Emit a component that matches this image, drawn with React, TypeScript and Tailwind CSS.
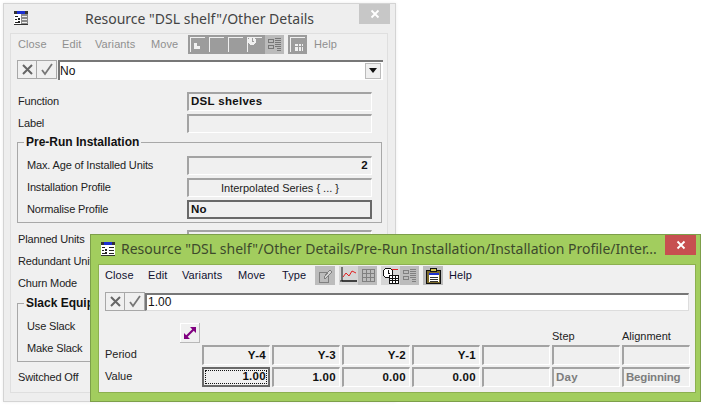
import type { ReactNode } from 'react';

const labelFont = "font-['Liberation_Sans',Arial,sans-serif]";
const titleFont = "font-['Noto_Sans','Open_Sans',sans-serif]";

function WindowIcon({ className, muted }: { className: string; muted?: boolean }) {
  return (
    <svg className={className} width="14" height="14" viewBox="0 0 14 14" shapeRendering="crispEdges">
      <rect width="14" height="14" fill="#333" />
      <rect x="3" y="0" width="8" height="3" fill="#1c2fd0" />
      <rect x="0" y="3" width="14" height="10" fill="#fff" />
      {muted && <rect x="7" y="3" width="7" height="10" fill="#8a8a8a" />}
      <path d="M1 5h3v1H1zM1 8h2v1H1zM4 7h2v2H4zM1 11h3v1H1zM4 10h2v2H4z" fill="#222" />
      <path d="M8 5h5v1H8zM8 8h5v1H8zM8 11h5v1H8z" fill={muted ? '#eee' : '#222'} />
    </svg>
  );
}

function CloseButton({ className, active }: { className: string; active?: boolean }) {
  return (
    <div className={`absolute flex items-center justify-center text-white ${className} ${active ? 'bg-[#c75050]' : 'bg-[#c7c7c7]'}`}>
      <svg width="10" height="10" viewBox="0 0 10 10">
        <path d="M1.5 1.5l7 7M8.5 1.5l-7 7" stroke="#fff" strokeWidth="1.8" />
      </svg>
    </div>
  );
}

function MenuItem({ width, children, muted }: { width: string; children: ReactNode; muted?: boolean }) {
  return <span className={`${width} ${muted ? 'text-[#8f8f8f]' : 'text-[#101030]'} text-[11px] tracking-[0.1px]`}>{children}</span>;
}

function EditButtons() {
  return (
    <>
      <div className="flex h-[19px] w-[20px] items-center justify-center border border-[#a8a8a8] bg-[#f0f0f0]">
        <svg width="13" height="13" viewBox="0 0 13 13">
          <path d="M2 2l9 9M11 2l-9 9" stroke="#666" strokeWidth="2" />
        </svg>
      </div>
      <div className="flex h-[19px] w-[20px] items-center justify-center border border-l-0 border-[#a8a8a8] bg-[#f0f0f0]">
        <svg width="14" height="13" viewBox="0 0 14 13">
          <path d="M2 7l3 4L12 1" stroke="#777" strokeWidth="1.8" fill="none" />
        </svg>
      </div>
    </>
  );
}

function Cell({ className, children }: { className: string; children?: ReactNode }) {
  return (
    <div className={`flex items-center border-t-2 border-l-2 border-r border-b border-t-[#a3a3a3] border-l-[#a3a3a3] border-r-white border-b-white ${className}`}>
      {children}
    </div>
  );
}

function BoldText({ children, className = 'tracking-[0.3px] text-[#111]' }: { children: ReactNode; className?: string }) {
  return <span className={`text-[11.5px] font-bold ${className}`}>{children}</span>;
}

function FormRow({ label, labelWidth, children }: { label: string; labelWidth: string; children?: ReactNode }) {
  return (
    <div className="flex h-[19px] items-center">
      <span className={`${labelWidth} shrink-0 text-[11px] tracking-[-0.15px] text-[#222]`}>{label}</span>
      {children ?? <Cell className="h-[19px] w-[185px]" />}
    </div>
  );
}

function GroupBox({ title, children }: { title: string; children: ReactNode }) {
  return (
    <fieldset className="w-[365px] border border-[#a8a8a8] pr-[9px] pb-[3px] pl-[9px]">
      <legend className="-ml-[3px] px-[2px] text-[12px] leading-[13px] font-bold text-[#111]">{title}</legend>
      <div className="flex flex-col gap-[3px] pt-[7px]">{children}</div>
    </fieldset>
  );
}

function BackWindow() {
  return (
    <div className={`absolute top-[3px] left-[3px] h-[399px] w-[393px] border border-[#d4d4d4] bg-[#eeeeee] shadow-[0_0_3px_rgba(0,0,0,0.08)] ${labelFont}`}>
      <WindowIcon className="absolute top-[7px] left-[10px]" muted />
      <CloseButton className="top-0 right-[5px] h-[20px] w-[31px]" />
      <div className={`h-[29px] pt-[2px] text-center text-[14px] leading-[26px] text-[#444] ${titleFont}`}>Resource "DSL shelf"/Other Details</div>
      <div className="mx-[6px] h-[360px] w-[378px] border border-[#dfdfdf] bg-[#f0f0f0] pl-[6px]">
        <div className="flex h-[20px] items-center pl-[1px]">
          <MenuItem width="w-[44px]" muted>Close</MenuItem>
          <MenuItem width="w-[33px]" muted>Edit</MenuItem>
          <MenuItem width="w-[56px]" muted>Variants</MenuItem>
          <MenuItem width="w-[37px]" muted>Move</MenuItem>
          <div className="flex h-[19px] w-[77px] bg-[#9c9c9c]">
            <svg width="77" height="19" viewBox="0 0 77 19" shapeRendering="crispEdges">
              <path d="M2 2h15M2 2v15M21 2h15M21 2v15M40 2h15M40 2v15M59 2h15M59 2v15" stroke="#f0f0f0" fill="none" />
              <path d="M6 8h3v3h3v3H6z" fill="#f0f0f0" />
              <circle cx="64" cy="6" r="4" fill="#f0f0f0" />
              <path d="M64 3v3h2" stroke="#9c9c9c" fill="none" />
            </svg>
          </div>
          <div className="flex h-[19px] w-[19px] items-center justify-center bg-[#bbbbbb]">
            <svg width="15" height="15" viewBox="0 0 15 15" shapeRendering="crispEdges">
              <path d="M1 2h5v3H1zM1 8h5v3H1zM8 1h6M8 3h6M8 5h6M8 7h6M8 9h6M10 11h4M10 13h4" stroke="#777" fill="none" />
            </svg>
          </div>
          <div className="ml-[4px] h-[19px] w-[19px] bg-[#9c9c9c]">
            <svg width="19" height="19" viewBox="0 0 19 19" shapeRendering="crispEdges">
              <path d="M2 2h15M2 2v15" stroke="#f0f0f0" fill="none" />
              <path d="M7 9h8v7H7z" fill="#f0f0f0" />
              <path d="M7 11h8M10 9v7M13 9v7" stroke="#9c9c9c" />
            </svg>
          </div>
          <span className="ml-[7px] text-[11px] tracking-[0.1px] text-[#8f8f8f]">Help</span>
        </div>
        <div className="mt-[5px] flex h-[21px] items-center">
          <EditButtons />
          <div className="ml-[1px] flex h-[20px] w-[325px] items-center justify-between border-t-2 border-l-2 border-t-[#777] border-l-[#777] bg-white pr-[2px] text-[12px] text-[#111]">
            No
            <div className="flex h-[16px] w-[16px] items-center justify-center border border-[#bbb] bg-[#efefef]">
              <svg width="8" height="5" viewBox="0 0 8 5"><path d="M0 0h8L4 5z" fill="#111" /></svg>
            </div>
          </div>
        </div>
        <div className="mt-[12px] flex flex-col gap-[3px]">
          <FormRow label="Function" labelWidth="w-[170px] pl-[1px]">
            <Cell className="h-[19px] w-[185px] pl-[2px]"><BoldText>DSL shelves</BoldText></Cell>
          </FormRow>
          <FormRow label="Label" labelWidth="w-[170px] pl-[1px]" />
        </div>
        <div className="mt-[3px]">
          <GroupBox title="Pre-Run Installation">
            <FormRow label="Max. Age of Installed Units" labelWidth="w-[160px]">
              <Cell className="h-[19px] w-[185px] justify-end pr-[3px]"><BoldText>2</BoldText></Cell>
            </FormRow>
            <FormRow label="Installation Profile" labelWidth="w-[160px]">
              <Cell className="h-[19px] w-[185px] justify-center text-[11px] text-[#222]">Interpolated Series {'{ ... }'}</Cell>
            </FormRow>
            <FormRow label="Normalise Profile" labelWidth="w-[160px]">
              <div className="flex h-[19px] w-[185px] items-center border-2 border-[#696969] pl-[2px]"><BoldText>No</BoldText></div>
            </FormRow>
          </GroupBox>
        </div>
        <div className="mt-[7px] flex flex-col gap-[3px]">
          <FormRow label="Planned Units" labelWidth="w-[170px] pl-[1px]" />
          <FormRow label="Redundant Units" labelWidth="w-[170px] pl-[1px]" />
          <FormRow label="Churn Mode" labelWidth="w-[170px] pl-[1px]" />
        </div>
        <div className="mt-[4px]">
          <GroupBox title="Slack Equipment">
            <FormRow label="Use Slack" labelWidth="w-[160px]" />
            <FormRow label="Make Slack" labelWidth="w-[160px]" />
          </GroupBox>
        </div>
        <div className="mt-[6px]">
          <FormRow label="Switched Off" labelWidth="w-[170px] pl-[1px]" />
        </div>
      </div>
    </div>
  );
}

const periods = ['Y-4', 'Y-3', 'Y-2', 'Y-1', '', '', ''];
const values = ['1.00', '1.00', '0.00', '0.00'];

function FrontWindow() {
  return (
    <div className={`absolute top-[234px] left-[90px] h-[168px] w-[611px] border border-[#7d9f4a] bg-[#a2cd5e] ${labelFont}`}>
      <WindowIcon className="absolute top-[7px] left-[10px]" />
      <CloseButton className="top-0 right-[4px] h-[20px] w-[31px]" active />
      <div className={`h-[29px] pl-[30px] text-[14px] leading-[28px] whitespace-nowrap text-[#3d4a2c] ${titleFont}`}>
        Resource "DSL shelf"/Other Details/Pre-Run Installation/Installation Profile/Inter...
      </div>
      <div className="mx-[7px] h-[129px] w-[598px] border border-[#8cb04f] bg-[#f0f0f0] pl-[6px]">
        <div className="flex h-[20px] items-center">
          <MenuItem width="w-[43px]">Close</MenuItem>
          <MenuItem width="w-[34px]">Edit</MenuItem>
          <MenuItem width="w-[56px]">Variants</MenuItem>
          <MenuItem width="w-[44px]">Move</MenuItem>
          <MenuItem width="w-[33px]">Type</MenuItem>
          <div className="flex h-[19px] w-[20px] items-center justify-center bg-[#bcbcbc]">
            <svg width="15" height="15" viewBox="0 0 15 15" shapeRendering="crispEdges">
              <path d="M1 4h9v10H1z" stroke="#808080" fill="none" />
              <path d="M6 9l6-7 2 2-6 6H6z" stroke="#808080" fill="#d4d4d4" />
            </svg>
          </div>
          <div className="ml-[4px] flex h-[19px] w-[38px] bg-[#bcbcbc]">
            <div className="flex h-[19px] w-[19px] items-center justify-center bg-[#d5d5d5]">
              <svg width="17" height="16" viewBox="0 0 17 16">
                <path d="M2 0v14h15M0 14h17" stroke="#111" fill="none" />
                <path d="M3 10l3-4 3 3 3-5 4 2" stroke="#e02020" fill="none" />
              </svg>
            </div>
            <div className="flex h-[19px] w-[19px] items-center justify-center">
              <svg width="14" height="14" viewBox="0 0 14 14" shapeRendering="crispEdges">
                <path d="M1 1h12v12H1zM1 5h12M1 9h12M5 1v12M9 1v12" stroke="#808080" fill="none" />
              </svg>
            </div>
          </div>
          <div className="ml-[4px] flex h-[19px] w-[38px] bg-[#bcbcbc]">
            <div className="flex h-[19px] w-[19px] items-center justify-center bg-[#d5d5d5]">
              <svg width="17" height="17" viewBox="0 0 17 17" shapeRendering="crispEdges">
                <circle cx="6" cy="6" r="5" fill="#fff" stroke="#111" />
                <path d="M6 3v3h2" stroke="#111" fill="none" />
                <path d="M7 8h9v8H7z" fill="#fff" stroke="#111" />
                <path d="M7 11h9M7 13h9M10 8v8M13 8v8" stroke="#111" />
                <path d="M10 2h6" stroke="#e02020" />
              </svg>
            </div>
            <div className="flex h-[19px] w-[19px] items-center justify-center">
              <svg width="15" height="15" viewBox="0 0 15 15" shapeRendering="crispEdges">
                <path d="M1 2h5v3H1zM1 8h5v3H1zM8 1h6M8 3h6M8 5h6M8 7h6M8 9h6M10 11h4M10 13h4" stroke="#808080" fill="none" />
              </svg>
            </div>
          </div>
          <div className="ml-[4px] flex h-[19px] w-[20px] items-center justify-center bg-[#bcbcbc]">
            <svg width="16" height="17" viewBox="0 0 16 17" shapeRendering="crispEdges">
              <path d="M1 3h14v13H1z" fill="#7d6b2c" stroke="#111" />
              <path d="M5 1h6v3H5z" fill="#d4c050" stroke="#111" />
              <path d="M4 6h10v9H4z" fill="#fff" />
              <path d="M4 6h10v2H4z" fill="#1c2fd0" />
              <path d="M5 10h8M5 12h8M5 14h8" stroke="#333" />
            </svg>
          </div>
          <span className="ml-[6px] text-[11px] tracking-[0.1px] text-[#101030]">Help</span>
        </div>
        <div className="mt-[7px] flex h-[19px] items-center">
          <EditButtons />
          <div className="flex h-[18px] w-[544px] items-center border-t-2 border-r border-b border-l-2 border-t-[#777] border-r-[#ddd] border-b-[#ddd] border-l-[#777] bg-white pl-[1px] text-[12px] text-[#111]">
            1.00
          </div>
        </div>
        <div className="relative mt-[12px] flex h-[22px]">
          <div className="ml-[75px] flex h-[20px] w-[20px] items-center justify-center border-r border-b border-[#b8b8b8] bg-[#f0f0f0] shadow-[inset_1px_1px_0_#fff]">
            <svg width="14" height="14" viewBox="0 0 14 14">
              <path d="M3 11l8-8" stroke="#800080" strokeWidth="2.2" />
              <path d="M7 1h6v6zM1 7v6h6z" fill="#800080" />
            </svg>
          </div>
          <span className="ml-[352px] w-[70px] self-end pb-[1px] text-[11px] text-[#222]">Step</span>
          <span className="self-end pb-[1px] text-[11px] text-[#222]">Alignment</span>
        </div>
        <div className="flex h-[20px] items-center gap-[2px]">
          <span className="w-[95px] pb-[2px] text-[11px] text-[#222]">Period</span>
          {periods.map((p, i) => (
            <Cell key={i} className="h-[20px] w-[68px] justify-end pr-[3px]"><BoldText>{p}</BoldText></Cell>
          ))}
        </div>
        <div className="mt-[2px] flex h-[20px] items-center gap-[2px]">
          <span className="w-[95px] pb-[2px] text-[11px] text-[#222]">Value</span>
          <div className="flex h-[20px] w-[68px] border-2 border-[#696969] p-[1px]">
            <div className="flex flex-1 items-center justify-end border border-dotted border-[#111]"><BoldText>{values[0]}</BoldText></div>
          </div>
          {values.slice(1).map((v, i) => (
            <Cell key={i} className="h-[20px] w-[68px] justify-end pr-[3px]"><BoldText>{v}</BoldText></Cell>
          ))}
          <Cell className="h-[20px] w-[68px]" />
          <Cell className="h-[20px] w-[68px] pl-[2px]"><BoldText className="tracking-[0.3px] text-[#7d7d7d]">Day</BoldText></Cell>
          <Cell className="h-[20px] w-[68px] pl-[2px]"><BoldText className="tracking-[-0.2px] text-[#7d7d7d]">Beginning</BoldText></Cell>
        </div>
      </div>
    </div>
  );
}

export default function App() {
  return (
    <div className="relative h-[405px] w-[708px] overflow-hidden bg-white">
      <BackWindow />
      <FrontWindow />
    </div>
  );
}
